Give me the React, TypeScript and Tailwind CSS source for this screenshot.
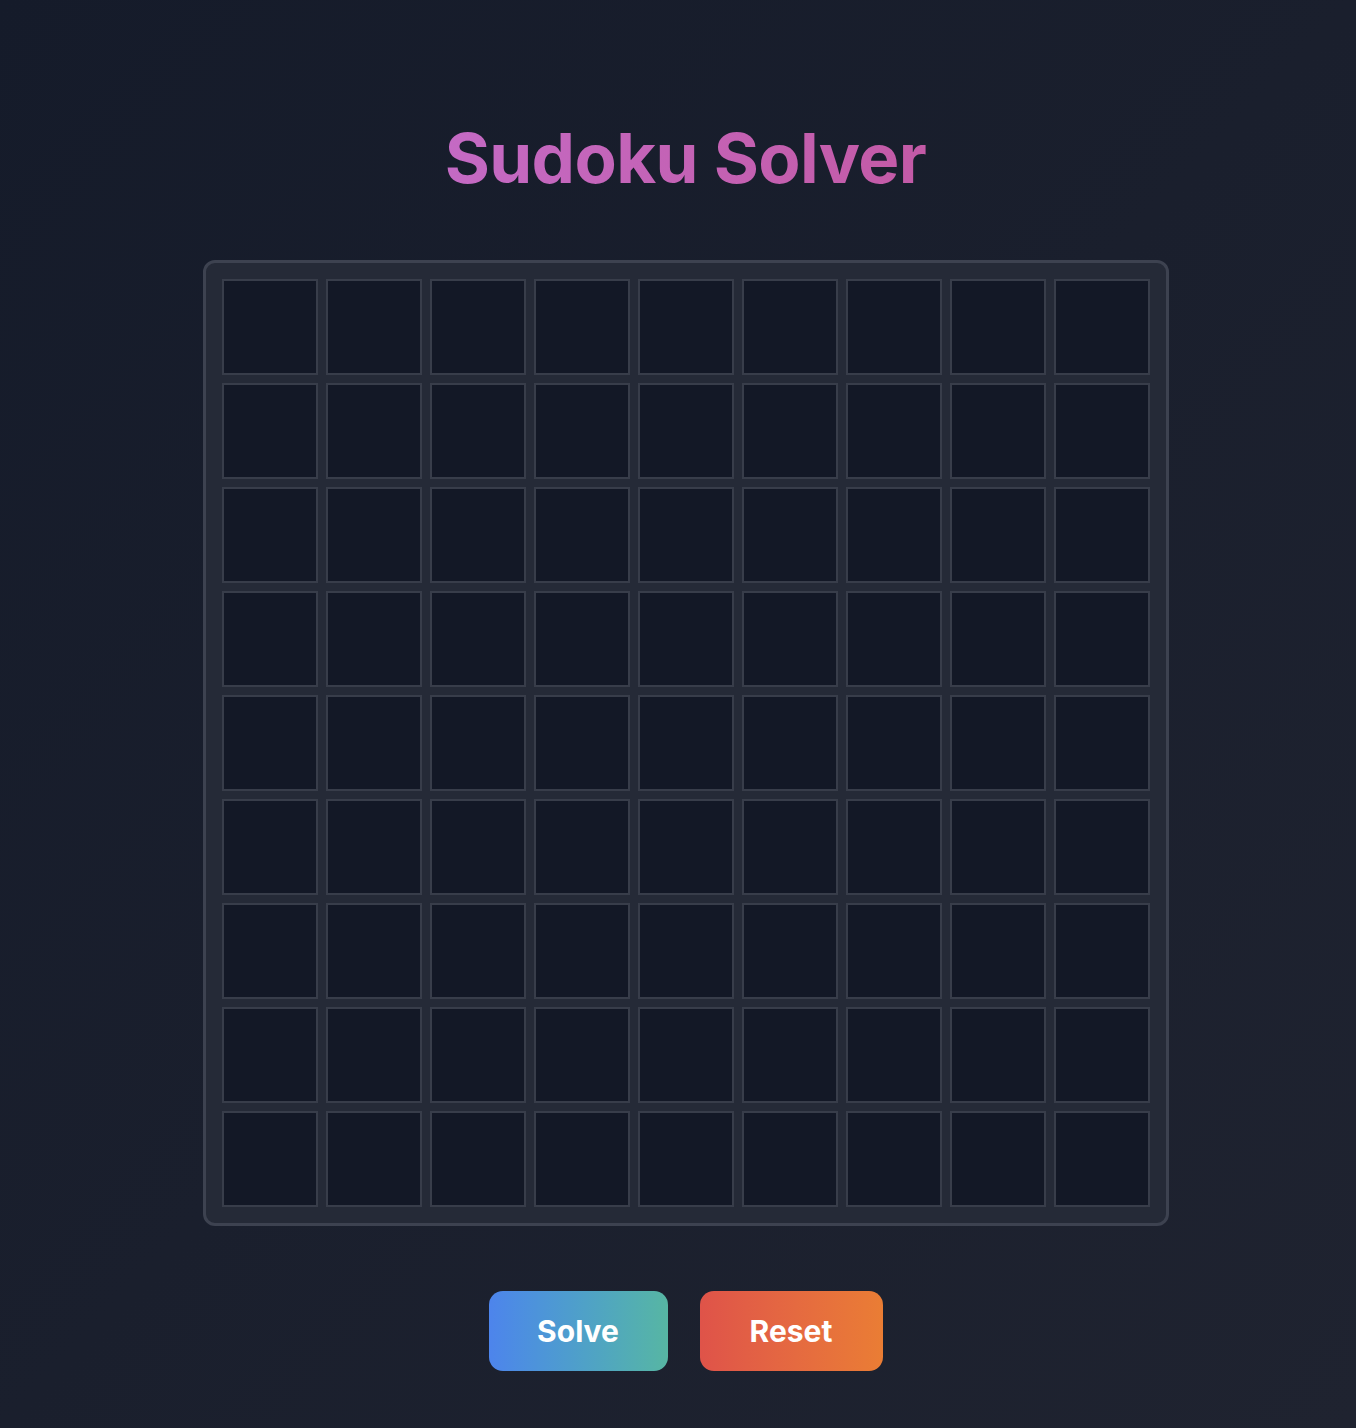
import React from "react";

export default function App() {
  const cells = Array.from({ length: 81 }, (_, i) => i);
  return (
    <div
      className="min-h-[1428px] w-full bg-gradient-to-br from-[#151b2a] to-[#1f2330] flex flex-col items-center pt-[119px] pl-[15px]"
      style={{ fontFamily: "Inter, 'Noto Sans', sans-serif" }}
    >
      <h1 className="text-[69px] leading-[78px] font-bold tracking-[-0.6px] bg-gradient-to-r from-[#c46ac4] to-[#c35aa6] bg-clip-text text-transparent">
        Sudoku Solver
      </h1>
      <div className="mt-[63px] rounded-xl border-[3px] border-[#3d4250] bg-[#252a37] p-4">
        <div className="grid grid-cols-[repeat(9,96px)] gap-2">
          {cells.map((i) => (
            <div
              key={i}
              className="h-[96px] w-[96px] border-2 border-[#383d4a] bg-[#131826]"
            />
          ))}
        </div>
      </div>
      <div className="mt-[65px] flex gap-8">
        <button className="h-[80px] w-[179px] rounded-[14px] bg-gradient-to-r from-[#4d84ec] to-[#57b6a3] text-[30px] font-bold text-white">
          Solve
        </button>
        <button className="h-[80px] w-[183px] rounded-[14px] bg-gradient-to-r from-[#df5349] to-[#ea7d34] text-[30px] font-bold text-white">
          Reset
        </button>
      </div>
    </div>
  );
}
